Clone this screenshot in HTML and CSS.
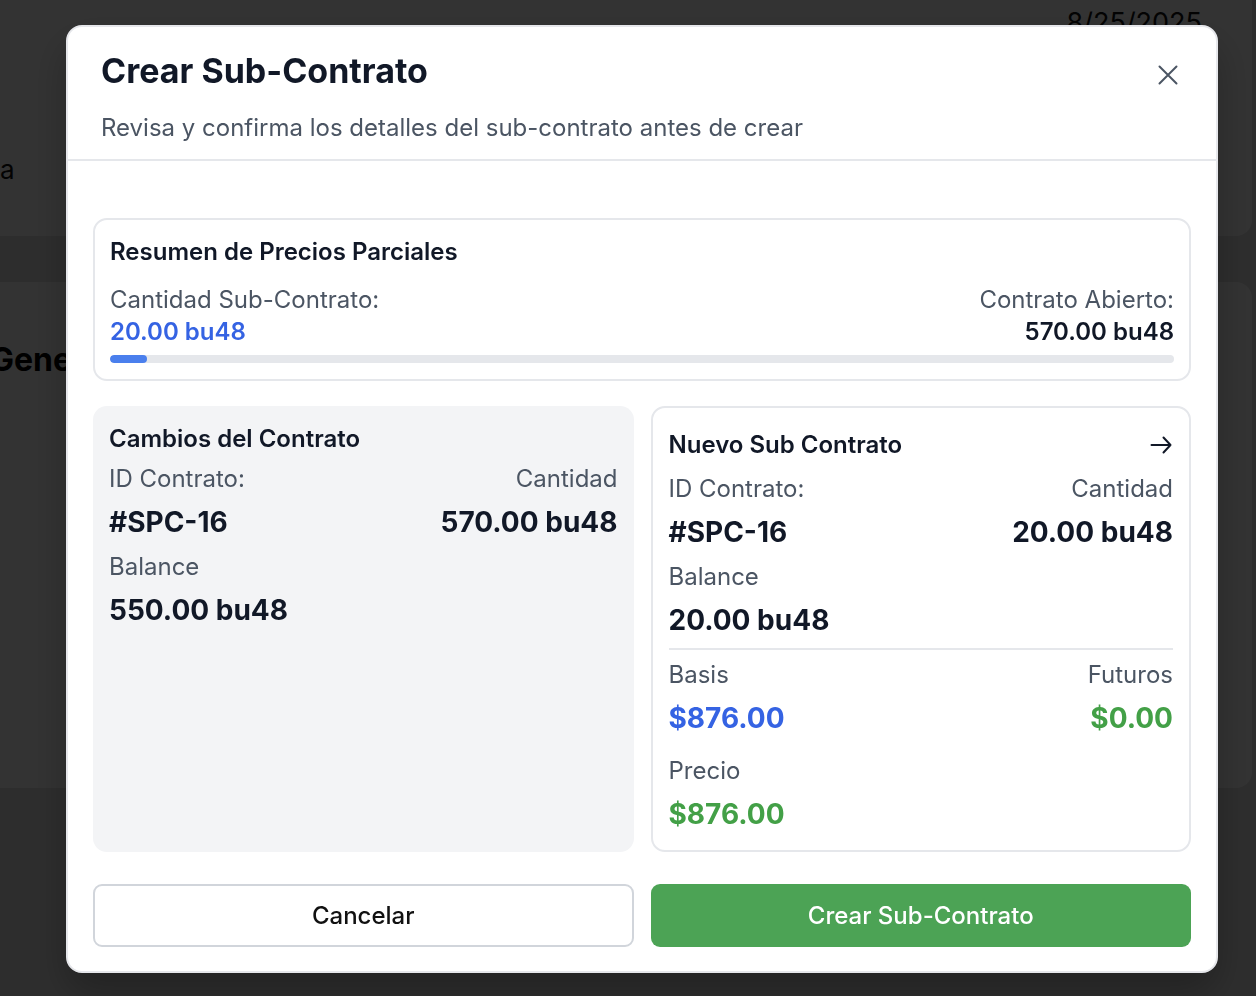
FILE: index.html
```html
<!DOCTYPE html>
<html lang="es">
<head>
<meta charset="utf-8">
<title>Crear Sub-Contrato</title>
<link rel="stylesheet" href="styles.css">
</head>
<body>
<div class="page">
  <div class="bg-card bg-top">
    <div class="bg-top-row"><span class="bg-date">8/25/2025</span></div>
    <div class="bg-word">a</div>
  </div>
  <div class="bg-card bg-main">
    <h2 class="bg-heading">General</h2>
  </div>
</div>
<div class="overlay"></div>

<div class="modal">
  <div class="modal-header">
    <div class="title-row">
      <h1 class="modal-title">Crear Sub-Contrato</h1>
      <button class="close-btn" aria-label="Cerrar">
        <svg width="24" height="24" viewBox="0 0 24 24" fill="none" stroke="currentColor" stroke-width="2" stroke-linecap="round"><path d="M3.5 3.5l17 17M20.5 3.5l-17 17"/></svg>
      </button>
    </div>
    <p class="modal-subtitle">Revisa y confirma los detalles del sub-contrato antes de crear</p>
  </div>

  <div class="modal-body">
    <section class="summary">
      <h3 class="card-title">Resumen de Precios Parciales</h3>
      <div class="summary-row">
        <div>
          <div class="label">Cantidad Sub-Contrato:</div>
          <div class="summary-value blue">20.00 bu48</div>
        </div>
        <div class="right">
          <div class="label">Contrato Abierto:</div>
          <div class="summary-value">570.00 bu48</div>
        </div>
      </div>
      <div class="progress"><div class="progress-fill" style="width:3.5%"></div></div>
    </section>

    <div class="columns">
      <section class="col col-old">
        <h3 class="card-title">Cambios del Contrato</h3>
        <div class="pair labels">
          <div class="label">ID Contrato:</div>
          <div class="label">Cantidad</div>
        </div>
        <div class="pair values">
          <div class="value">#SPC-16</div>
          <div class="value">570.00 bu48</div>
        </div>
        <div class="label sub-label">Balance</div>
        <div class="value sub-value">550.00 bu48</div>
      </section>

      <section class="col col-new">
        <div class="pair head">
          <h3 class="card-title">Nuevo Sub Contrato</h3>
          <svg class="arrow" width="24" height="24" viewBox="0 0 24 24" fill="none" stroke="#111827" stroke-width="2" stroke-linecap="round" stroke-linejoin="round"><path d="M2.5 12h19M14.5 4.5l7 7.5-7 7.5"/></svg>
        </div>
        <div class="pair labels">
          <div class="label">ID Contrato:</div>
          <div class="label">Cantidad</div>
        </div>
        <div class="pair values">
          <div class="value">#SPC-16</div>
          <div class="value">20.00 bu48</div>
        </div>
        <div class="label sub-label">Balance</div>
        <div class="value sub-value">20.00 bu48</div>
        <div class="divider"></div>
        <div class="pair">
          <div class="label">Basis</div>
          <div class="label">Futuros</div>
        </div>
        <div class="pair values">
          <div class="value blue">$876.00</div>
          <div class="value green">$0.00</div>
        </div>
        <div class="label precio">Precio</div>
        <div class="value sub-value green">$876.00</div>
      </section>
    </div>

    <div class="actions">
      <button class="btn btn-cancel">Cancelar</button>
      <button class="btn btn-create">Crear Sub-Contrato</button>
    </div>
  </div>
</div>
</body>
</html>
```

FILE: styles.css
```css
* { box-sizing: border-box; }
html, body { margin: 0; padding: 0; }
body {
  background: #e2e2e2;
  font-family: Inter, "Noto Sans", "Liberation Sans", sans-serif;
  color: #111827;
  width: 1256px;
  height: 996px;
  overflow: hidden;
}

/* background page */
.page {
  margin-left: -40px;
  width: 1292px;
  display: flex;
  flex-direction: column;
  gap: 46px;
}
.bg-card {
  background: #ffffff;
  border-radius: 16px;
}
.bg-top {
  height: 236px;
  border-radius: 0 0 16px 16px;
  display: flex;
  flex-direction: column;
}
.bg-top-row {
  display: flex;
  justify-content: flex-end;
  padding: 9px 50px 0 0;
}
.bg-date {
  font-size: 27px;
  color: #111;
  line-height: 1;
}
.bg-word {
  margin-top: 118px;
  padding-left: 40px;
  font-size: 26px;
  color: #111;
}
.bg-main {
  height: 506px;
  padding: 58px 0 0 30px;
}
.bg-heading {
  margin: 0;
  font-size: 32px;
  font-weight: 700;
  color: #000;
}
.overlay {
  position: fixed;
  inset: 0;
  background: rgba(0, 0, 0, 0.8);
}

/* modal */
.modal {
  position: fixed;
  left: 66px;
  top: 25px;
  width: 1152px;
  background: #ffffff;
  border: 2px solid #e6e7eb;
  border-radius: 16px;
  box-shadow: 0 20px 40px rgba(0,0,0,0.25);
  overflow: hidden;
}
.modal-header {
  padding: 22px 36px 15px 33px;
  border-bottom: 2px solid #e5e7eb;
}
.title-row {
  display: flex;
  justify-content: space-between;
  align-items: flex-start;
}
.modal-title {
  margin: 0;
  font-size: 34px;
  font-weight: 700;
  line-height: 44px;
  color: #111827;
}
.close-btn {
  border: 0;
  background: none;
  padding: 0;
  margin-top: 14px;
  color: #4b5563;
  display: flex;
  cursor: pointer;
}
.modal-subtitle {
  margin: 19px 0 0;
  font-size: 24px;
  line-height: 32px;
  color: #4b5563;
}

.modal-body {
  padding: 57px 25px 24px;
  display: flex;
  flex-direction: column;
}

.summary {
  border: 2px solid #e5e7eb;
  border-radius: 14px;
  padding: 16px 15px 16px;
}
.card-title {
  margin: 0;
  font-size: 24px;
  font-weight: 600;
  line-height: 32px;
  color: #111827;
}
.summary-row {
  margin-top: 16px;
  display: flex;
  justify-content: space-between;
}
.right { text-align: right; }
.label {
  font-size: 24px;
  line-height: 32px;
  color: #4b5563;
}
.summary-value {
  font-size: 24px;
  line-height: 32px;
  font-weight: 600;
  color: #111827;
}
.blue { color: #3563e3 !important; }
.green { color: #43a047 !important; }
.progress {
  margin-top: 7px;
  height: 8px;
  border-radius: 4px;
  background: #e5e7eb;
  overflow: hidden;
}
.progress-fill {
  height: 100%;
  background: #4a7fed;
  border-radius: 4px;
}

.columns {
  margin-top: 25px;
  display: grid;
  grid-template-columns: 1fr 1fr;
  gap: 17px;
}
.col {
  border-radius: 14px;
  display: flex;
  flex-direction: column;
}
.col-old {
  background: #f3f4f6;
  padding: 17px 16px 17px;
}
.col-new {
  border: 2px solid #e5e7eb;
  padding: 21px 16px 17px;
}
.pair {
  display: flex;
  justify-content: space-between;
  align-items: center;
}
.head { height: 32px; }
.col-old .labels { margin-top: 8px; }
.col-new .labels { margin-top: 12px; }
.values { margin-top: 8px; }
.value {
  font-size: 28px;
  line-height: 38px;
  font-weight: 700;
  color: #111827;
}
.sub-label { margin-top: 10px; }
.sub-value { margin-top: 8px; }
.divider {
  height: 2px;
  background: #e5e7eb;
  margin: 9px 0 9px;
}
.precio { margin-top: 18px; }

.actions {
  margin-top: 32px;
  display: grid;
  grid-template-columns: 1fr 1fr;
  gap: 17px;
}
.btn {
  height: 63px;
  border-radius: 9px;
  font-family: Inter, "Noto Sans", "Liberation Sans", sans-serif;
  font-size: 24px;
  font-weight: 500;
  cursor: pointer;
}
.btn-cancel {
  background: #ffffff;
  border: 2px solid #d1d5db;
  color: #111111;
}
.btn-create {
  background: #4ca355;
  border: 0;
  color: #ffffff;
}
```
